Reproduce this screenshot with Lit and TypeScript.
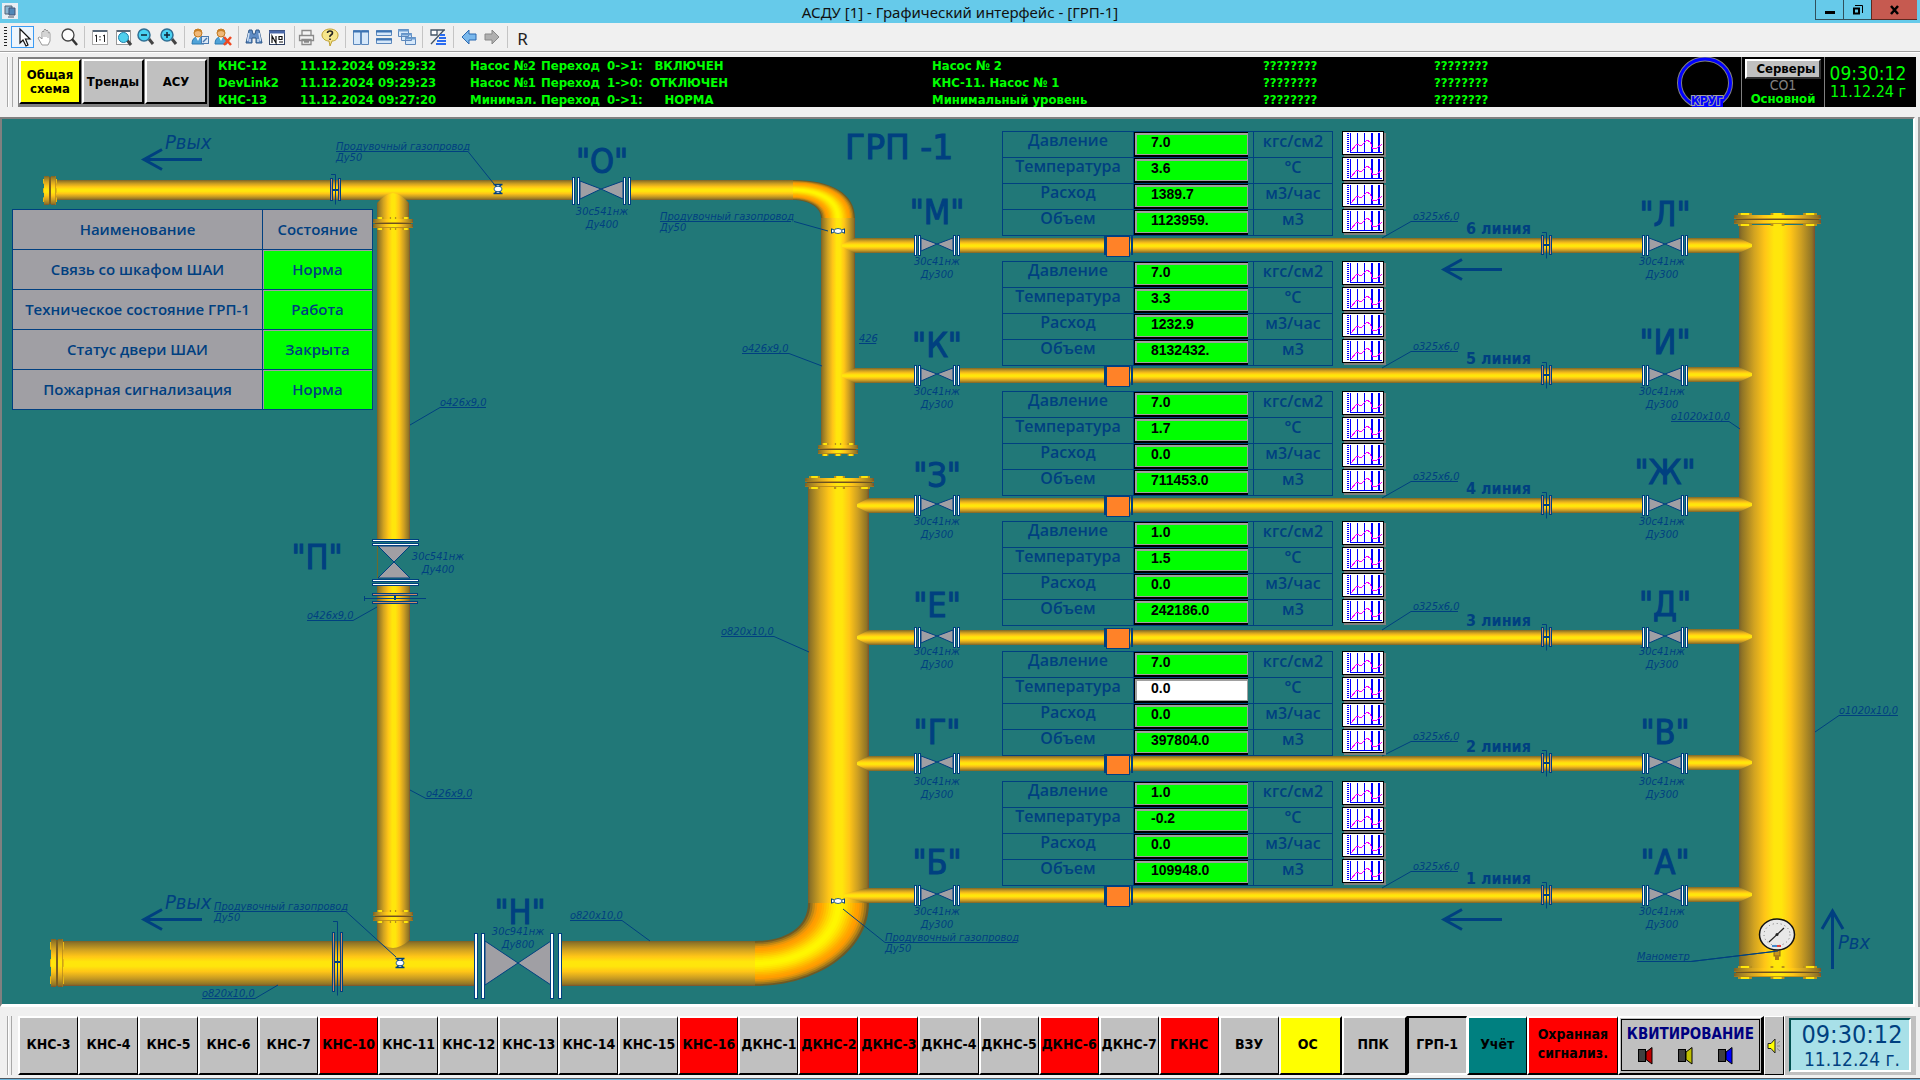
import { LitElement, html, svg, css } from "lit";
import { customElement } from "lit/decorators.js";

const INK = "#004080";

/* ---------- scheme data ---------- */

interface Line { no: number; y: number; right: number; left: string; far: string; leftBase: number; farBase: number; tip: number; body: number; values: string[]; }

const LINES: Line[] = [
  { no: 6, y: 238, right: 238, left: "М", far: "Л", leftBase: 224, farBase: 226, tip: 842, body: 855, values: ["7.0", "3.6", "1389.7", "1123959."] },
  { no: 5, y: 368, right: 367, left: "К", far: "И", leftBase: 357, farBase: 354, tip: 842, body: 855, values: ["7.0", "3.3", "1232.9", "8132432."] },
  { no: 4, y: 498, right: 497, left: "З", far: "Ж", leftBase: 487, farBase: 484, tip: 857, body: 869, values: ["7.0", "1.7", "0.0", "711453.0"] },
  { no: 3, y: 630, right: 629, left: "Е", far: "Д", leftBase: 617, farBase: 616, tip: 857, body: 869, values: ["1.0", "1.5", "0.0", "242186.0"] },
  { no: 2, y: 756, right: 755, left: "Г", far: "В", leftBase: 744, farBase: 744, tip: 857, body: 869, values: ["7.0", "0.0", "0.0", "397804.0"] },
  { no: 1, y: 888, right: 887, left: "Б", far: "А", leftBase: 874, farBase: 874, tip: 844, body: 866, values: ["1.0", "-0.2", "0.0", "109948.0"] },
];

const PARAMS = [
  ["Давление", "кгс/см2"],
  ["Температура", "°C"],
  ["Расход", "м3/час"],
  ["Объем", "м3"],
];

const STATUS = [
  ["Связь со шкафом ШАИ", "Норма"],
  ["Техническое состояние ГРП-1", "Работа"],
  ["Статус двери ШАИ", "Закрыта"],
  ["Пожарная сигнализация", "Норма"],
];

/* text, x, baseline, underline end, leader end */
const CALLOUTS: [string, number, number, number, number, number, number][] = [
  ["Продувочный газопровод", 336, 150, 468, 468, 494, 184],
  ["Продувочный газопровод", 660, 220, 791, 794, 828, 231],
  ["Продувочный газопровод", 214, 910, 346, 346, 396, 957],
  ["Продувочный газопровод", 885, 941, 1017, 885, 843, 909],
  ["о426х9,0", 440, 406, 486, 440, 410, 425],
  ["о426х9,0", 742, 352, 789, 789, 822, 366],
  ["о426х9,0", 307, 619, 353, 353, 377, 607],
  ["о426х9,0", 426, 797, 472, 426, 410, 790],
  ["о820х10,0", 202, 997, 255, 255, 278, 985],
  ["о820х10,0", 570, 919, 622, 622, 650, 941],
  ["о820х10,0", 721, 635, 774, 774, 809, 652],
  ["о1020х10,0", 1671, 420, 1729, 1729, 1740, 429],
  ["о1020х10,0", 1839, 714, 1898, 1839, 1815, 732],
  ["Манометр", 1637, 960, 1691, 1691, 1778, 951],
  ["426", 859, 342, 876, 876, 876, 343],
];

/* ---------- drawing helpers ---------- */

const hPipe = (x1: number, x2: number, y: number, h: number) =>
  svg`<rect x=${x1} y=${y} width=${x2 - x1} height=${h} fill="url(#pipeH)"/>`;
const vPipe = (x: number, w: number, y1: number, y2: number) =>
  svg`<rect x=${x} y=${y1} width=${w} height=${y2 - y1} fill="url(#pipeV)"/>`;

const flangeV = (x: number, y: number, w: number) => {
  const b = w * 0.16;
  const bolts = [x + 4, x + w / 2 - b / 2, x + w - 4 - b];
  return svg`
    ${bolts.map(bx => svg`<rect x=${bx} y=${y} width=${b} height="13" fill="#b8901c"/><rect x=${bx + b * 0.2} y=${y} width=${b * 0.6} height="13" fill="#ffe60a"/>`)}
    <rect x=${x} y=${y + 2} width=${w} height="4" fill="url(#pipeV)"/>
    <rect x=${x + 2} y=${y + 6} width=${w - 4} height="1" fill="#6b5122"/>
    <rect x=${x} y=${y + 7} width=${w} height="4" fill="url(#pipeV)"/>
    <rect x=${x} y=${y + 5} width=${w} height="1" fill="#a87c1c" opacity=".7"/>
    <rect x=${x} y=${y + 10} width=${w} height="1" fill="#a87c1c" opacity=".7"/>`;
};
const flangeH = (x: number, y: number, h: number) => {
  const b = h * 0.16;
  const bolts = [y + 3, y + h / 2 - b / 2, y + h - 3 - b];
  return svg`
    ${bolts.map(by => svg`<rect x=${x} y=${by} width="14" height=${b} fill="#e8b814"/>`)}
    <rect x=${x + 1} y=${y} width="5" height=${h} fill="url(#pipeH)"/>
    <rect x=${x + 6} y=${y + 1} width="2" height=${h - 2} fill="#7d5f22"/>
    <rect x=${x + 8} y=${y} width="5" height=${h} fill="url(#pipeH)"/>
    <rect x=${x + 12} y=${y} width="1" height=${h} fill="#a87c1c" opacity=".6"/>`;
};

/* Bend shaded by nesting bands between the outer and the inner curve. */
const BEND = ["#6f5a24", "#9a741d", "#c48812", "#e8950a", "#ff9c00", "#ffa400", "#ffb000", "#ffbe00", "#ffcc00", "#ffda00", "#ffe600", "#fff000", "#fff600"];
const bend = (o: number[], i: number[]) => {
  const at = (t: number) => o.map((v, k) => v + (i[k] - v) * t);
  return BEND.map((c, k) => {
    const t = k / (BEND.length * 2);
    const a = at(t), b = at(1 - t);
    return svg`<path fill=${c} d="M${a[0]} ${a[1]}C${a[2]} ${a[3]} ${a[4]} ${a[5]} ${a[6]} ${a[7]}L${b[6]} ${b[7]}C${b[4]} ${b[5]} ${b[2]} ${b[3]} ${b[0]} ${b[1]}Z"/>`;
  });
};

const bar = (x: number, y: number, w: number, h: number, fill = "#fff") =>
  svg`<rect x=${x + 0.5} y=${y + 0.5} width=${w - 1} height=${h - 1} fill=${fill} stroke=${INK}/>`;

const tri = (d: string) => svg`<path d=${d} fill="#a09fa4" stroke=${INK}/>`;

const lineValve = (x: number, y: number) => svg`
  <rect x=${x} y=${y - 3} width="46" height="21" fill="#217878"/>
  ${tri(`M${x + 7} ${y}L${x + 23} ${y + 6}L${x + 7} ${y + 13}Z`)}
  ${tri(`M${x + 39} ${y}L${x + 23} ${y + 6}L${x + 39} ${y + 13}Z`)}
  ${bar(x, y - 3, 3, 21)}${bar(x + 4, y - 3, 3, 21)}
  ${bar(x + 39, y - 3, 3, 21)}${bar(x + 43, y - 3, 3, 21)}`;

const orifice = (x: number, y: number, h: number, over: number) => svg`
  ${bar(x, y, 3, h, "#c98a66")}${bar(x + 8, y, 3, h, "#c98a66")}
  <path d="M${x + 1} ${y - over + 0.5}h4.5v${h + over + 3}" fill="none" stroke=${INK}/>
  <rect x=${x + 2} y=${y + Math.round(h / 2) - 1} width="7" height="2" fill=${INK}/>`;

const purgeValve = (x: number, y: number) => svg`
  <g transform="translate(${x} ${y})">
    <path d="M-6.500 -2.500V2.500M6.500 -2.500V2.500M-6 -2L-2 0L-6 2M6 -2L2 0L6 2" fill="#fff" stroke=${INK}/>
    <ellipse rx="4" ry="2.500" fill="#fff" stroke=${INK} stroke-width=".8"/>
  </g>`;

const purgeValveUp = (x: number, y: number) => svg`
  <g transform="translate(${x} ${y})">
    <path d="M-4.500 -4.500H4.500M-4.500 4.500H4.500M-3 -4L0 -1L3 -4M-3 4L0 1L3 4" fill="#fff" stroke=${INK} stroke-width="1.500"/>
    <ellipse rx="4" ry="2.800" fill="#fff" stroke=${INK} stroke-width=".8"/>
  </g>`;

const arrow = (x: number, y: number) => svg`
  <path d="M${x + 60} ${y}H${x + 3}M${x + 20} ${y - 10}L${x + 2} ${y}L${x + 20} ${y + 10}" fill="none" stroke=${INK} stroke-width="3"/>`;

const model = (x: number, y: number, name: string, dn: string) => svg`
  <text class="note mid" x=${x} y=${y}>${name}</text>
  <text class="note mid" x=${x} y=${y + 13}>${dn}</text>`;

const chart = svg`
  <rect width="40" height="22" fill="#fff"/>
  <path d="M4.500 1V21" stroke="#00f" stroke-width="2" stroke-dasharray="1 1" fill="none"/>
  <path d="M7.500 1V20.500M14.500 1V20M21.500 1V20M7 20.500H39" stroke="#00f" fill="none"/>
  <path d="M29 1V20M36 1V20" stroke="#00f" stroke-width="2" fill="none"/>
  <path d="M8 19L14 12L18 14L24 8L27 10L30 17L34 16L39 12" stroke="#f0f" fill="none"/>`;

/* ---------- toolbar icons ---------- */

const lens = (x: number, fill: string, mark: string) => svg`
  <path d="M${x + 5} 12L${x + 9} 17" stroke="#444" stroke-width="3"/>
  <circle cx=${x} cy="8" r="6" fill=${fill} stroke="#2f6f94" stroke-width="1.500"/>
  <path d=${mark} stroke="#123" stroke-width="1.500" fill="none"/>`;

const person = svg`
  <path d="M2 17q0-7 6-7t6 7z" fill="#4fa3d8" stroke="#2a78b0"/><path d="M6 10l2 4 2-4z" fill="#fff"/>
  <circle cx="8" cy="6" r="4" fill="#f0b878" stroke="#c07820"/><path d="M4 6q0-4 4-4t4 4q-2-2-4-2t-4 2z" fill="#c88028"/>`;

const ICONS: Record<string, unknown> = {
  pick: svg`<path d="M7 2V16L10 13L13 19L15 18L12.500 12H17Z" fill="#fff" stroke="#111" stroke-width="1.200"/>`,
  hand: svg`<path d="M6 18L2 11q1-2 3 0l1 1V5q1-2 2 0V3q1-2 2 0v1q1-2 2 0v2q2-2 2 1v7l-2 4z" fill="#fff" stroke="#999"/><path d="M8 5v5M10 4v6M12 6v5" stroke="#aaa"/>`,
  zoom: svg`<circle cx="9" cy="8" r="6" fill="#fdfdfd" stroke="#444" stroke-width="1.300"/><path d="M13 12l5 6" stroke="#333" stroke-width="2.500"/>`,
  one: svg`<rect x="2.500" y="3.500" width="15" height="14" fill="#fff" stroke="#aaa"/><path d="M3 4h14" stroke="#567" stroke-width="2"/><path d="M5 9l1.500-1v7M13 9l1.500-1v7M10 9v1.500M10 12v1.500" stroke="#222" fill="none"/>`,
  fit: svg`<rect x="3.500" y="3.500" width="14" height="14" fill="#fff" stroke="#999"/><path d="M4 4h13" stroke="#567" stroke-width="2"/><path d="M14 13l4 5" stroke="#444" stroke-width="3"/><circle cx="10.500" cy="10.500" r="5" fill="#4fd0ee" stroke="#1f7fa8"/>`,
  minus: lens(8, "#49d2f2", "M5 8h6"),
  plus: lens(8, "#49d2f2", "M5 8h6M8 5v6"),
  userKey: svg`${person}<rect x="11.500" y="9.500" width="7" height="7" fill="#dce9f6" stroke="#4a7ab0"/><path d="M13 15l4-4" stroke="#4a7ab0" stroke-width="1.500"/>`,
  userDel: svg`${person}<path d="M11 10l7 8M18 10l-7 8" stroke="#f04820" stroke-width="2.500"/>`,
  find: svg`<path d="M5 3h3l1 4h2l1-4h3l3 13h-6v-5H8v5H2z" fill="#5f8cc4" stroke="#2c5688"/><path d="M5 6l-1.500 8M15 6l1.500 8M6 12v3M14 12v3" stroke="#cfe0f4" stroke-width="1.500"/>`,
  number: svg`<rect x="2.500" y="3.500" width="15" height="14" fill="#fff" stroke="#346"/><path d="M2 5h16" stroke="#4a68a8" stroke-width="3"/><path d="M5 16V9l4 7V9M12 9.500h3v3h-3zM12 15h4" stroke="#111" stroke-width="1.200" fill="none"/>`,
  print: svg`<path d="M5 8V3.500h9V8M2.500 8.500h14v5h-14zM5 12.500h9v5H5zM7 15h5" fill="#f4f4f4" stroke="#8a8a8a" stroke-width="1.300"/>`,
  help: svg`<path d="M10 2c5 0 8 3 8 6s-2 6-6 6l-2 5-1-5c-4 0-7-3-7-6s3-6 8-6z" fill="#f6e68c" stroke="#c0a030"/><path d="M7.500 6q0-2 2.500-2t2.500 2q0 1-1.500 2t-1 2M10 11.500v1.500" stroke="#222" stroke-width="1.600" fill="none"/>`,
  cols: svg`<path d="M2.500 3.500h7v14h-7zM10.500 3.500h7v14h-7z" fill="#d6e8fa" stroke="#5c88bc"/><path d="M2 4.500h16" stroke="#3c74b4" stroke-width="2"/>`,
  rows: svg`<path d="M2.500 3.500h15v5h-15zM2.500 11.500h15v5h-15z" fill="#d6e8fa" stroke="#5c88bc"/><path d="M2 4.500h16M2 12.500h16" stroke="#3c74b4" stroke-width="2"/>`,
  cascade: svg`<path d="M1.500 2.500h10v7h-10zM4.500 6.500h10v7h-10zM8.500 10.500h10v7h-10z" fill="#d6e8fa" stroke="#5c88bc"/><path d="M1 3.500h11M4 7.500h11M8 11.500h11" stroke="#6c9cd0" stroke-width="2"/>`,
  align: svg`<path d="M3 3h6v5H3zM3 17L16 3M9 3h8" fill="#fff" stroke="#456" stroke-width="1.300"/><path d="M12 8h5M11 11h7M9 14h9M8 17h10" stroke="#2a6cf0" stroke-width="2"/>`,
  back: svg`<path d="M3 10l7-7v4h7v6h-7v4z" fill="#7ab8ec" stroke="#2a68b0"/>`,
  next: svg`<path d="M17 10l-7-7v4H3v6h7v4z" fill="#b0b0b0" stroke="#888"/>`,
};

const TOOLS: [string, string][][] = [
  [["pick", "Выбор"], ["hand", "Рука"], ["zoom", "Масштаб"]],
  [["one", "1:1"], ["fit", "По размеру"], ["minus", "Уменьшить"], ["plus", "Увеличить"]],
  [["userKey", "Вход"], ["userDel", "Выход"]],
  [["find", "Поиск"], ["number", "Номер"]],
  [["print", "Печать"], ["help", "Справка"]],
  [["cols", "Столбцы"], ["rows", "Строки"], ["cascade", "Каскад"]],
  [["align", "Слои"]],
  [["back", "Назад"], ["next", "Вперёд"]],
];

const LOG = [
  ["КНС-12", "11.12.2024 09:29:32", "Насос №2", "Переход", "0->1:", "ВКЛЮЧЕН", "Насос № 2"],
  ["DevLink2", "11.12.2024 09:29:23", "Насос №1", "Переход", "1->0:", "ОТКЛЮЧЕН", "КНС-11. Насос № 1"],
  ["КНС-13", "11.12.2024 09:27:20", "Минимал.", "Переход", "0->1:", "НОРМА", "Минимальный уровень"],
];

const STATIONS = ["КНС-3", "КНС-4", "КНС-5", "КНС-6", "КНС-7", "!КНС-10", "КНС-11", "КНС-12", "КНС-13", "КНС-14", "КНС-15", "!КНС-16",
  "ДКНС-1", "!ДКНС-2", "!ДКНС-3", "ДКНС-4", "ДКНС-5", "!ДКНС-6", "ДКНС-7", "!ГКНС", "ВЗУ"];

/* ---------- header ---------- */

@customElement("tool-bar")
class ToolBar extends LitElement {
  static styles = css`
    :host { display: block; }
    .bar { display: flex; align-items: center; height: 29px; padding-left: 4px; background: #f0f0f0; border-bottom: 1px solid #a0a0a0; box-sizing: border-box; }
    .grip { width: 3px; height: 20px; margin-right: 4px; background: repeating-linear-gradient(#222 0 1px, transparent 1px 3px); }
    .group { display: flex; }
    .group + .group { margin-left: 4px; padding-left: 3px; border-left: 1px solid #c4c4c4; }
    .group + .wide { margin-left: 6px; padding-left: 0; }
    button { width: 23px; height: 22px; padding: 0; border: 1px solid transparent; background: none; display: grid; place-items: center; }
    .on { border-color: #3c9cf4; background: #eef5fc; }
    svg { width: 20px; height: 20px; display: block; }
    .text { font: 17px "Noto Sans", "Open Sans", sans-serif; color: #222; }
  `;
  render() {
    return html`<div class="bar"><div class="grip"></div>
      ${TOOLS.map(g => html`<div class=${g[0][0] === "print" ? "group wide" : "group"}>${g.map(([k, label]) => html`
        <button class=${k === "pick" ? "on" : ""} aria-label=${label}><svg viewBox="0 0 20 20">${ICONS[k]}</svg></button>`)}</div>`)}
      <div class="group"><button class="text">R</button></div></div>`;
  }
}

@customElement("event-header")
class EventHeader extends LitElement {
  static styles = css`
    :host { display: flex; height: 50px; font: bold 13px/17px "DejaVu Sans Condensed", "DejaVu Sans", sans-serif; }
    .grip { width: 4px; margin: 0 5px 0 7px; border: 1px solid #a8a8a8; border-width: 0 1px; box-shadow: inset 1px 0 #fff; }
    .nav { display: flex; background: #808080; padding: 2px 2px 3px 1px; gap: 1px; }
    .nav button { width: 62px; height: 45px; padding: 0; background: #c0c0c0; border: 2px solid; border-color: #fff #000 #000 #fff; font: bold 13px/14px "DejaVu Sans Condensed", sans-serif; color: #000; }
    .nav .yellow { background: #ff0; }
    .log { flex: 1; min-width: 0; background: #000; color: #0f0; overflow: hidden; }
    table { border-collapse: collapse; table-layout: fixed; width: 1300px; }
    td { padding: 0; height: 17px; line-height: 17px; white-space: pre; }
    .c1 { width: 82px; } .c2 { width: 170px; } .c3 { width: 71px; } .c4 { width: 66px; } .c5 { width: 42px; } .c6 { width: 80px; }
    .gap { width: 203px; } .c7 { width: 331px; } .c8 { width: 171px; }
    td:nth-child(6) { text-align: center; }
    .pad { padding-left: 9px; }
    .logo { width: 66px; background: #000; display: block; }
    .servers { width: 83px; background: #000; border-left: 1px solid #808080; display: flex; flex-direction: column; align-items: center; padding-top: 2px; box-sizing: border-box; color: #0f0; line-height: 15px; }
    .servers button { width: 76px; height: 20px; padding: 0 0 0 6px; background: #c0c0c0; border: 2px solid; border-color: #fff #303030 #303030 #fff; font: bold 13px/14px "DejaVu Sans Condensed", sans-serif; color: #000; }
    .co { color: #808080; font-size: 14px; font-weight: normal; line-height: 12px; }
    .clock { width: 92px; margin-right: 4px; padding-right: 5px; background: #000; border-left: 1px solid #808080; box-sizing: border-box; color: #0f0; font: 19px/20px "DejaVu Sans Condensed", sans-serif; display: flex; flex-direction: column; justify-content: center; align-items: center; white-space: nowrap; }
    .date { font-size: 16px; line-height: 18px; }
  `;
  render() {
    return html`<div class="grip"></div>
      <nav class="nav"><button class="yellow">Общая<br>схема</button><button>Тренды</button><button>АСУ</button></nav>
      <div class="log"><div class="pad"><table>
        <colgroup><col class="c1"><col class="c2"><col class="c3"><col class="c4"><col class="c5"><col class="c6"><col class="gap"><col class="c7"><col class="c8"><col></colgroup>
        <tbody>${LOG.map(r => html`<tr>${r.slice(0, 6).map(c => html`<td>${c}</td>`)}<td></td><td>${r[6]}</td><td>????????</td><td>????????</td></tr>`)}</tbody>
      </table></div></div>
      <svg class="logo" viewBox="0 0 66 50" width="66" height="50" role="img" aria-label="КРУГ">
        <ellipse cx="30" cy="26" rx="25.500" ry="24" fill="none" stroke="#808080" stroke-width="5"/>
        <ellipse cx="30" cy="26" rx="25.500" ry="24" fill="none" stroke="#00f" stroke-width="3"/>
        <rect x="17" y="38" width="31" height="12" fill="#00f"/>
        <text x="32" y="48" text-anchor="middle" font-size="12" fill="#00f" stroke="#a0a0a0" stroke-width="2" paint-order="stroke">КРУГ</text>
      </svg>
      <div class="servers"><button>Серверы</button><span class="co">СО1</span><span>Основной</span></div>
      <div class="clock"><span>09:30:12</span><span class="date">11.12.24 г</span></div>`;
  }
}

/* ---------- scheme ---------- */

@customElement("meter-panel")
class MeterPanel extends LitElement {
  static properties = { values: { type: Array }, line: { type: Number } };
  declare values: string[];
  declare line: number;
  static styles = css`
    :host { display: flex; gap: 9px; color: #004080; font: 600 16px/17px "Open Sans", "DejaVu Sans", sans-serif; }
    table { border-collapse: collapse; table-layout: fixed; width: 331px; height: 105px; }
    th, td { padding: 0; border: 1px solid #004080; height: 25px; font-weight: 600; text-align: center; vertical-align: top; box-sizing: border-box; }
    .name { width: 131px; }
    .val { width: 120px; }
    .box { width: 114px; height: 25px; box-sizing: border-box; padding-left: 16px; background: #0f0; border: 1px solid #000; border-right: 0; border-bottom-width: 2px; box-shadow: inset 2px 2px #a0a0a0, inset -1px -1px #a0a0a0; text-align: left; font: bold 14px/19px "Liberation Sans", Arial, sans-serif; color: #000; }
    .idle { background: #fff; }
    .unit { line-height: 19px; }
    .trends { display: flex; flex-direction: column; gap: 2px; }
    button { width: 42px; height: 24px; padding: 0; border: 1px solid #000; background: #fff; box-shadow: 2px 2px #808080; }
    svg { display: block; width: 40px; height: 22px; }
  `;
  render() {
    return html`<table><tbody>${PARAMS.map(([n, u], i) => html`
      <tr><th class="name" scope="row">${n}</th>
        <td class="val"><div class=${this.line === 2 && i === 1 ? "box idle" : "box"}>${this.values[i]}</div></td>
        <td class="unit">${u}</td></tr>`)}</tbody></table>
      <div class="trends">${PARAMS.map(([n]) => html`<button aria-label="${n}: тренд"><svg viewBox="0 0 40 22" shape-rendering="crispEdges">${chart}</svg></button>`)}</div>`;
  }
}

@customElement("gas-scheme")
class GasScheme extends LitElement {
  static styles = css`
    :host { display: block; position: relative; overflow: hidden; background: #217878; }
    .drawing { position: absolute; left: 0; top: 0; display: block; }
    .status { position: absolute; left: 10px; top: 90px; width: 361px; border-collapse: collapse; table-layout: fixed; background: #a09fa4; color: #004080; font: 600 15px/20px "Open Sans", "DejaVu Sans Condensed", sans-serif; }
    .status th, .status td { height: 40px; padding: 0 0 2px; box-sizing: border-box; border: 1px solid #004080; text-align: center; font-weight: 600; white-space: nowrap; }
    .status .state { width: 110px; }
    .status td.state { background: #0f0; box-shadow: inset 1px 1px #a09fa4; }
    .meter { position: absolute; left: 1000px; }
    text { fill: #004080; font-family: "DejaVu Sans Condensed", "DejaVu Sans", sans-serif; }
    .mark { font-size: 34px; text-anchor: middle; stroke: #004080; }
    .head { font: 33px "DejaVu Sans", sans-serif; stroke: #004080; }
    .note { font-size: 11px; font-style: italic; }
    .mid { text-anchor: middle; }
    .flow { font-size: 20px; font-style: italic; }
    .line { font-size: 16px; font-weight: bold; }
  `;
  render() {
    return html`
      <svg class="drawing" width="1910" height="885" viewBox="2 119 1910 885">
        <defs>
          ${["pipeH", "pipeV"].map((id, v) => svg`<linearGradient id=${id} x1="0" y1="0" x2=${v ? 1 : 0} y2=${v ? 0 : 1}>
            <stop offset="0" stop-color="#7a5f2a"/><stop offset=".04" stop-color="#8f7426"/><stop offset=".2" stop-color="#d2a321"/>
            <stop offset=".34" stop-color="#ffc517"/><stop offset=".46" stop-color="#ffe60c"/><stop offset=".56" stop-color="#ffe60c"/>
            <stop offset=".68" stop-color="#ffc517"/><stop offset=".82" stop-color="#cc9e22"/><stop offset=".96" stop-color="#8f7426"/><stop offset="1" stop-color="#7a5030"/>
          </linearGradient>`)}
        </defs>

        ${hPipe(55, 573, 180, 20)}${hPipe(631, 793, 180, 20)}${flangeH(43, 176, 29)}
        <path d="M377 229V203Q386 193 393 193T409 203V229Z" fill="url(#pipeV)"/>
        ${vPipe(377, 33, 229, 540)}${vPipe(377, 33, 585, 912)}
        ${flangeV(373, 217, 40)}
        ${bend([793, 180, 832, 180, 855, 194, 855, 218], [793, 200, 808, 200, 821, 207, 821, 218])}
        ${vPipe(821, 34, 218, 445)}${flangeV(818, 443, 40)}

        ${hPipe(62, 475, 941, 45)}${hPipe(562, 755, 941, 45)}${flangeH(50, 939, 48)}
        <path d="M377 920V940Q386 948 393 948T410 940V920Z" fill="url(#pipeV)"/>
        ${flangeV(373, 910, 40)}
        ${vPipe(808, 61, 487, 903)}${flangeV(805, 476, 69)}
        ${bend([869, 903, 869, 950, 818, 986, 755, 986], [808, 903, 808, 927, 786, 941, 755, 941])}

        ${vPipe(1739, 76, 225, 968)}${flangeV(1734, 213, 87)}${flangeV(1734, 966, 87)}

        ${LINES.map(l => svg`
          <path d="M914 ${l.y}H${l.body}L${l.tip} ${l.y + 6}V${l.y + 9}L${l.body} ${l.y + 15}H914Z" fill="url(#pipeH)"/>
          ${hPipe(960, 1642, l.y, 15)}
          <path d="M1688 ${l.right}H1739L1752 ${l.right + 6}V${l.right + 9}L1739 ${l.right + 15}H1688Z" fill="url(#pipeH)"/>
          ${lineValve(914, l.y)}${lineValve(1642, l.y)}
          ${orifice(1541, l.y - 3, 20, 3)}
          <rect x="1104" y=${l.y - 2} width="2" height="19" fill=${INK}/>
          <rect x="1106.500" y=${l.y - 1.5} width="23" height="20" fill="#ff8228" stroke=${INK}/>
          <rect x="1131" y=${l.y - 2} width="2" height="19" fill=${INK}/>
          <text class="mark" x="937" y=${l.leftBase}>"${l.left}"</text>
          <text class="mark" x="1665" y=${l.farBase}>"${l.far}"</text>
          ${model(937, 1045 - l.no * 130, "30с41нж", "Ду300")}
          ${model(1662, 1045 - l.no * 130, "30с41нж", "Ду300")}
          <text class="note" x="1413" y=${1000 - l.no * 130}>о325х6,0</text>
          <path d="M1458 ${1001.5 - l.no * 130}H1411L1382 ${l.y}" fill="none" stroke=${INK}/>
          <text class="line" x="1466" y=${l.y - 4}>${l.no} линия</text>`)}

        ${tri("M580 181L601 189L580 199Z")}${tri("M623 181L601 189L623 199Z")}
        ${bar(572, 177, 3, 28)}${bar(577, 177, 3, 28)}${bar(623, 177, 3, 28)}${bar(628, 177, 3, 28)}
        ${tri("M485 941L518 963L485 985Z")}${tri("M551 941L518 963L551 985Z")}
        ${bar(474, 933, 4, 66)}${bar(481, 933, 4, 66)}${bar(550, 933, 4, 66)}${bar(558, 933, 4, 66)}
        ${tri("M378 546H410L394 562Z")}${tri("M378 578H410L394 562Z")}
        <path d="M377.500 546V578" stroke="#6a6a30"/>
        ${bar(372, 539, 47, 3)}${bar(372, 543, 47, 3)}${bar(372, 579, 47, 3)}${bar(372, 583, 47, 3)}

        ${orifice(330, 178, 23, 4)}${orifice(332, 932, 60, 11)}
        ${bar(372, 593, 46, 3, "#c98a66")}${bar(372, 601, 46, 3, "#c98a66")}
        <path d="M364.500 596V601M364 598.500H426" stroke=${INK}/><rect x="394" y="595" width="2" height="5" fill=${INK}/>

        ${purgeValveUp(498, 189)}${purgeValve(838, 231)}${purgeValveUp(400, 963)}${purgeValve(838, 901)}

        ${CALLOUTS.map(([t, x, y, ux, lx, ex, ey]) => svg`
          <text class="note" x=${x} y=${y}>${t}</text>
          <path d="M${x} ${y + 1.5}H${ux}M${lx} ${y + 1.5}L${ex} ${ey}" fill="none" stroke=${INK}/>
          ${t.startsWith("Прод") ? svg`<text class="note" x=${x} y=${y + 11}>Ду50</text>` : null}`)}

        ${arrow(142, 159.5)}${arrow(142, 919.5)}${arrow(1442, 269.5)}${arrow(1442, 919.5)}
        <path d="M1832.500 969V912M1822 929L1832.500 911L1843 929" fill="none" stroke=${INK} stroke-width="3"/>

        <text class="mark" x="602" y="173">"О"</text>
        <text class="mark" x="317" y="569">"П"</text>
        <text class="mark" x="520" y="924">"Н"</text>
        <text class="head" x="845" y="159">ГРП -1</text>
        ${model(602, 215, "30с541нж", "Ду400")}
        ${model(438, 560, "30с541нж", "Ду400")}
        ${model(518, 935, "30с941нж", "Ду800")}
        <text class="flow" x="165" y="149">Рвых</text>
        <text class="flow" x="165" y="909">Рвых</text>
        <text class="flow" x="1838" y="949">Рвх</text>

        <rect x="1774" y="948" width="6" height="8" fill="#c8961c" stroke="#8a6418"/><rect x="1775" y="956" width="4" height="4" fill="#a87a18"/>
        <ellipse cx="1777" cy="934.500" rx="17.500" ry="15.500" fill="#e8e8e8" stroke="#111" stroke-width="1.500"/>
        <ellipse cx="1777" cy="934.500" rx="13" ry="11" fill="none" stroke="#777" stroke-dasharray="1 3"/>
        <path d="M1769 942L1784 928" stroke="#222" stroke-width="1.200"/><circle cx="1777" cy="934.500" r="1.500" fill="#222"/>
        <rect x="1772" y="945" width="5" height="2" fill="#48c"/><rect x="1777" y="945" width="4" height="2" fill="#d44"/>
        <path d="M1691 961.500L1778 951" stroke=${INK}/>
      </svg>

      <table class="status">
        <thead><tr><th>Наименование</th><th class="state">Состояние</th></tr></thead>
        <tbody>${STATUS.map(([n, s]) => html`<tr><td>${n}</td><td class="state">${s}</td></tr>`)}</tbody>
      </table>
      ${LINES.map(l => html`<meter-panel class="meter" style="top:${792 - l.no * 130}px" .values=${l.values} .line=${l.no}></meter-panel>`)}
    `;
  }
}

/* ---------- footer ---------- */

const horn = (c: string) => html`<button class="horn" aria-label="Квитировать"><svg viewBox="0 0 16 18" width="16" height="18">
  <rect x=".5" y="2.500" width="7" height="12" fill="#404040" stroke="#000"/><path d="M8 5L14 .5V17L8 12.500Z" fill=${c} stroke="#000"/></svg></button>`;

@customElement("station-bar")
class StationBar extends LitElement {
  static styles = css`
    :host { display: flex; height: 59px; padding-right: 4px; font: 16px/18px "DejaVu Sans Condensed", sans-serif; }
    .grip { flex: none; width: 3px; margin: 0 6px 0 7px; border: 1px solid #a8a8a8; border-width: 0 1px; box-shadow: inset 1px 0 #fff; }
    .st { flex: 60 1 60px; min-width: 0; box-sizing: border-box; padding: 0 0 3px; border: 2px solid; border-color: #fff #000 #000 #fff; border-right-width: 1px; background: #c0c0c0; color: #000; font: bold 14px/18px "DejaVu Sans Condensed", sans-serif; white-space: nowrap; display: flex; justify-content: center; align-items: center; text-align: center; }
    .red { background: #f00; }
    .yellow { background: #ff0; flex: 63 1 63px; border-right-width: 2px; padding-right: 5px; }
    .mid { flex: 65 1 65px; border-right-width: 2px; padding-right: 2px; }
    .in { border-color: #000 #fff #fff #000; }
    .teal { background: #008080; }
    .guard { flex: 91 1 91px; line-height: 19px; }
    .ack { flex: 146 1 146px; box-sizing: border-box; background: #c0c0c0; border: 2px solid; border-color: #fff #000 #000 #fff; border-right-width: 3px; padding: 1px 1px 2px; color: #000080; font: bold 15px/20px "DejaVu Sans Condensed", sans-serif; text-align: center; }
    .inner { border: 1px solid #000; height: 100%; box-sizing: border-box; padding-top: 4px; }
    .horns { display: flex; justify-content: center; gap: 24px; padding: 3px 8px 0 0; }
    .horn { padding: 0; border: 0; background: none; width: 16px; height: 18px; }
    .sound { flex: 20 1 20px; min-width: 0; padding: 0; background: #c0c0c0; border: 1px solid; border-color: #fff #000 #000 #fff; display: grid; place-items: center; }
    .clock { flex: 132 1 132px; box-sizing: border-box; background: #c0c0c0; border-left: 1px solid #fff; padding: 2px 5px 3px 4px; }
    .face { height: 100%; box-sizing: border-box; padding-left: 4px; background: #a8e0e8; border: 2px solid; border-color: #005050 #fff #fff #005050; color: #004080; display: flex; flex-direction: column; align-items: center; justify-content: center; font: 25px/28px "DejaVu Sans Condensed", sans-serif; white-space: nowrap; }
    .date { font-size: 19px; line-height: 20px; }
  `;
  render() {
    return html`<div class="grip"></div>
      ${STATIONS.map(s => html`<button class=${s[0] === "!" ? "st red" : "st"}>${s.replace("!", "")}</button>`)}
      <button class="st yellow">ОС</button><button class="st mid">ППК</button><button class="st in">ГРП-1</button>
      <button class="st teal">Учёт</button><button class="st red guard">Охранная<br>сигнализ.</button>
      <div class="ack"><div class="inner">КВИТИРОВАНИЕ<div class="horns">${horn("#c00000")}${horn("#c0c000")}${horn("#0000ff")}</div></div></div>
      <button class="sound" aria-label="Звук"><svg viewBox="0 0 14 16" width="14" height="16"><path d="M1 5.500h3L8 1v14L4 10.500H1z" fill="#ff0" stroke="#222"/><path d="M10 5.500L13 3M10 8h3M10 10.500L13 13" stroke="#888"/></svg></button>
      <div class="clock"><div class="face"><span>09:30:12</span><span class="date">11.12.24 г.</span></div></div>`;
  }
}

@customElement("app-root")
class AppRoot extends LitElement {
  static styles = css`
    :host { display: flex; flex-direction: column; height: 100vh; background: #f0f0f0; overflow: hidden; }
    .title { display: grid; grid-template-columns: 1fr auto 1fr; height: 23px; background: #66caea; color: #111; font: 15px/24px "Noto Sans", "Open Sans", sans-serif; }
    .app { display: block; width: 16px; height: 16px; margin: 3px 0 0 2px; }
    .win { display: flex; justify-content: flex-end; padding-right: 3px; height: 20px; }
    .win button { width: 28px; padding: 0; background: #66caea; border: 1px solid #30505c; border-width: 0 0 1px 1px; display: grid; place-items: center; }
    .win .shut { width: 46px; background: #c65a50; border-color: #5c2820; }
    .head { padding: 4px 0 10px; border-top: 1px solid #fff; }
    .stage { flex: 1; min-height: 0; border: 2px solid; border-color: #808080 #fff #fff #808080; border-bottom-width: 3px; margin-right: 5px; box-shadow: 3px 0 #f0f0f0, 5px 0 #a0a0a0; }
    .foot { padding: 9px 0 3px; }
    .task { height: 1px; border-top: 1px solid #505860; background: #6ab4dc; }
  `;
  render() {
    return html`
      <header class="title">
        <svg class="app" viewBox="0 0 16 16"><rect width="16" height="16" fill="#e8eef4"/><path d="M3 3h7v8H3z" fill="#8cb4d0" stroke="#567"/><path d="M7 5h6v7H7z" fill="#5088b8" stroke="#457"/><path d="M6 14h6" stroke="#456"/></svg>
        <span>АСДУ [1] - Графический интерфейс - [ГРП-1]</span>
        <div class="win">
          <button aria-label="Свернуть"><svg width="12" height="12"><rect x="1" y="7" width="10" height="3"/></svg></button>
          <button aria-label="Восстановить"><svg width="12" height="12"><path d="M2 4.500h5v5H2z" fill="none" stroke="#000" stroke-width="2"/><path d="M3 1.500h7.500V9" fill="none" stroke="#000"/></svg></button>
          <button class="shut" aria-label="Закрыть"><svg width="12" height="12"><path d="M2 2l7 8M9 2l-7 8" stroke="#000" stroke-width="2.500"/></svg></button>
        </div>
      </header>
      <tool-bar></tool-bar>
      <div class="head"><event-header></event-header></div>
      <gas-scheme class="stage"></gas-scheme>
      <div class="foot"><station-bar></station-bar></div>
      <div class="task"></div>`;
  }
}
